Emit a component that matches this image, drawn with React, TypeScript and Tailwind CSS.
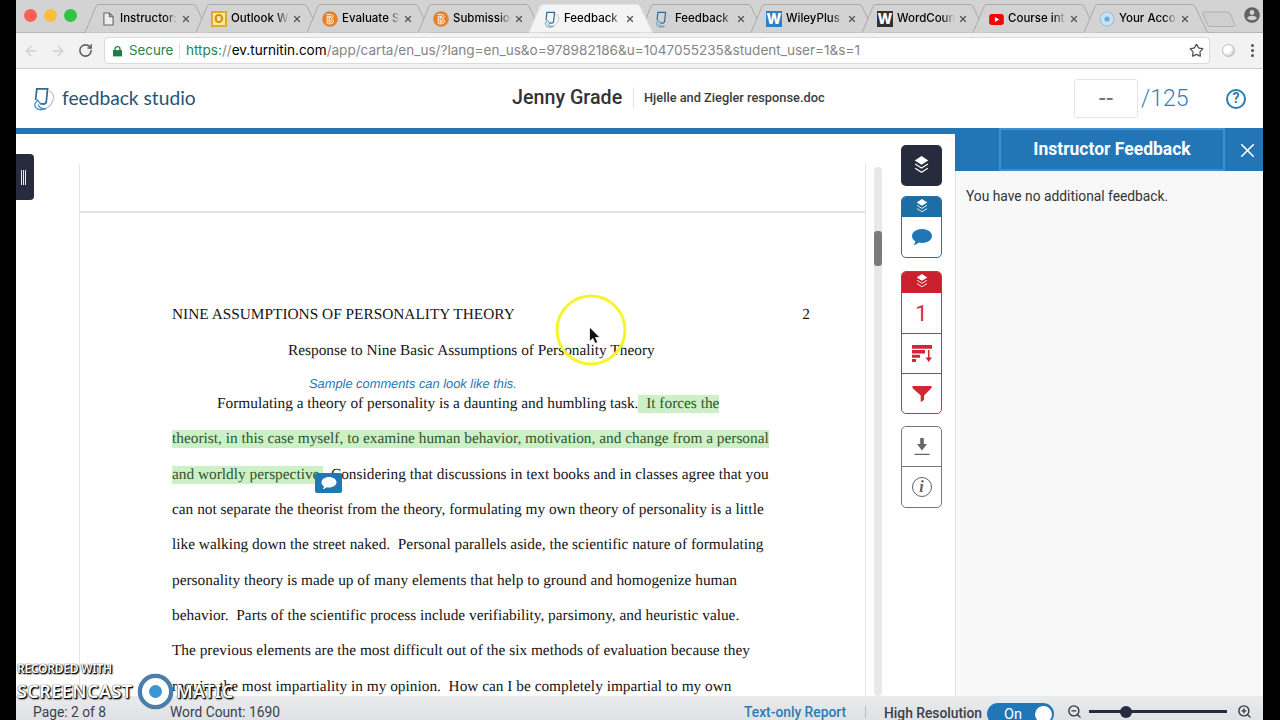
import { ArrowLeft, ArrowRight, RotateCw, Star, X, ZoomIn, ZoomOut } from 'lucide-react';
import type { ReactNode } from 'react';

function TurnitinMark({ className }: { className: string }) {
  return (
    <svg viewBox="0 0 22 24" fill="none" className={className}>
      <path d="M2.600 13 3.800 1.800h10.800L13.200 15.500l-2 1.700-4.200-.5" stroke="#34688f" strokeWidth="1.700" />
      <path d="M16.500 4c6.500 3.500 5.500 13-5.500 18.500" stroke="#b5c6d2" strokeWidth="1.200" />
      <path d="M1.500 17.500c.8 5 5.500 6.500 11.500 4.200-4.500.3-7.200-1.200-7.800-4.200" stroke="#4d93c7" strokeWidth="1.300" />
      <path d="M1.500 17.700 4.500 13l3.200 4.200" stroke="#4d93c7" strokeWidth="1.300" />
    </svg>
  );
}

function OrangeB() {
  return (
    <svg viewBox="0 0 16 16" className="size-4">
      <circle cx="8" cy="8" r="7.800" fill="#e5812a" />
      <path d="M4.500 3.500h4.200c3 0 3 4 .3 4.300 3.400.2 3.300 5-.5 5H5.200V5.300h3.200c1 0 1 1.200 0 1.200H7v4.800h1.700c1.300 0 1.300-1.800 0-1.800H7" fill="none" stroke="#fff" strokeWidth=".9" />
    </svg>
  );
}

function LetterW({ className }: { className: string }) {
  return (
    <span className={`flex size-4 items-center justify-center font-[Inter] text-[14px] leading-none font-extrabold text-white ${className}`}>
      W
    </span>
  );
}

const tabs: { title: string; icon: ReactNode; active?: boolean }[] = [
  {
    title: 'Instructor: C',
    icon: (
      <svg viewBox="0 0 12 15" className="h-[14px] w-[11px]" fill="#eee" stroke="#666" strokeWidth="1.200">
        <path d="M1 1h6l4 4v9H1zM7 1v4h4" />
      </svg>
    ),
  },
  {
    title: 'Outlook Web',
    icon: (
      <span className="flex size-4 items-center justify-center border-2 border-[#e0aa2a] bg-[#fbe9a5] font-[Inter] text-[12px] leading-none font-extrabold text-[#d48f10]">
        O
      </span>
    ),
  },
  { title: 'Evaluate Su', icon: <OrangeB /> },
  { title: 'Submission', icon: <OrangeB /> },
  { title: 'Feedback', icon: <TurnitinMark className="h-[17px] w-4" />, active: true },
  { title: 'Feedback', icon: <TurnitinMark className="h-[17px] w-4" /> },
  { title: 'WileyPlus', icon: <LetterW className="bg-[#2f7fc1]" /> },
  { title: 'WordCounte', icon: <LetterW className="bg-[#303030]" /> },
  {
    title: 'Course intro',
    icon: (
      <svg viewBox="0 0 16 12" className="h-[11px] w-[15px]">
        <rect width="16" height="12" rx="3" fill="#f00808" />
        <path d="m6.200 3.300 4.600 2.700-4.600 2.700z" fill="#fff" />
      </svg>
    ),
  },
  {
    title: 'Your Accou',
    icon: (
      <svg viewBox="0 0 16 16" className="size-4">
        <circle cx="8" cy="8" r="7" fill="#d3e0e8" stroke="#8cc6e8" strokeWidth="1.200" />
        <circle cx="8" cy="8" r="2.600" fill="#55b1e8" />
      </svg>
    ),
  },
];

function Tab({ title, icon, active }: { title: string; icon: ReactNode; active?: boolean }) {
  return (
    <div className={`relative h-[33px] w-[111px] shrink-0 ${active ? 'z-10' : ''}`}>
      <svg viewBox="0 0 124 33" className="absolute top-0 left-0 h-[33px] w-[124px]">
        <path
          d="M0 32.500 11 6.500q.8-2 3-2h94q2 0 3 2l12.500 26"
          fill={active ? '#f4f4f4' : '#d3d3d3'}
          stroke={active ? '#e4e4e4' : '#a9a9a9'}
        />
      </svg>
      <div className="relative flex h-[38px] items-center pl-[15px]">
        <span className="flex w-4 justify-center">{icon}</span>
        <span className="ml-1 w-[58px] overflow-hidden font-[Inter] text-[11.500px] font-medium whitespace-nowrap text-black mask-r-from-78% mask-r-to-100%">
          {title}
        </span>
        <X className="ml-[3px] size-[10px] text-[#555]" strokeWidth={3} />
      </div>
    </div>
  );
}

function Browser() {
  return (
    <>
      <div className="flex h-[33px] shrink-0 border-b border-[#b5b5b5] bg-[#d3d3d3]">
        <div className="flex w-[69px] shrink-0 gap-[7px] pt-[9px] pl-[8px]">
          <span className="size-[13px] rounded-full bg-[#f9605a]" />
          <span className="size-[13px] rounded-full bg-[#fbbd3c]" />
          <span className="size-[13px] rounded-full bg-[#2cc640]" />
        </div>
        {tabs.map((tab, i) => (
          <Tab key={i} {...tab} />
        ))}
        <svg viewBox="0 0 34 17" className="mt-[11px] ml-[7px] h-[17px] w-[34px] shrink-0" fill="#cfcfcf" stroke="#b0b0b0">
          <path d="M1.500 1h24q2 0 3 2l4 10.500q.5 2-1.500 2H8.500q-2 0-3-2L1 3q-.5-2 1-2z" />
        </svg>
        <svg viewBox="0 0 16 16" className="absolute top-[7px] right-[20px] size-4">
          <circle cx="8" cy="8" r="7.800" fill="#626262" />
          <circle cx="8" cy="5.500" r="2.400" fill="#d3d3d3" />
          <path d="M3.200 11c1-3 8.600-3 9.600 0-1.500 3-8 3-9.600 0z" fill="#d3d3d3" />
        </svg>
      </div>
      <div className="flex h-9 shrink-0 items-center border-b border-[#cfcfcf] bg-[#f2f2f2] pl-[7px]">
        <ArrowLeft className="size-[16px] text-[#cfcfcf]" strokeWidth={2} />
        <ArrowRight className="ml-[11px] size-[16px] text-[#cfcfcf]" strokeWidth={2} />
        <RotateCw className="ml-[12px] size-[15px] text-[#606060]" strokeWidth={2.500} />
        <div className="ml-[11px] flex h-[27px] w-[1106px] items-center rounded-[4px] border border-[#dadada] bg-white font-[Inter] text-[13.560px] text-[#858585]">
          <svg viewBox="0 0 10 12" className="ml-[8px] h-[12px] w-[9px]" fill="#188045">
            <path d="M0 5h10v7H0z" />
            <path d="M2.300 6V3.500c0-3.200 5.400-3.200 5.400 0V6" fill="none" stroke="#188045" strokeWidth="1.500" />
          </svg>
          <span className="ml-[7px] w-[44px] text-[13.300px] text-[#26834a]">Secure</span>
          <span className="ml-[6px] h-4 w-px bg-[#ddd]" />
          <span className="ml-[6px] whitespace-nowrap">
            <span className="text-[#26834a]">https:</span>//<span className="text-black">ev.turnitin.com</span>
            /app/carta/en_us/?lang=en_us&amp;o=978982186&amp;u=1047055235&amp;student_user=1&amp;s=1
          </span>
          <Star className="mr-[5px] ml-auto size-[15px] text-[#505050]" strokeWidth={2} />
        </div>
        <span className="ml-[12px] size-[13px] rounded-full border border-[#bbb] bg-radial-[at_35%_35%] from-white from-40% to-[#aaa]" />
        <span className="ml-[16px] flex flex-col gap-[2px]">
          <span className="size-[3px] rounded-full bg-[#555]" />
          <span className="size-[3px] rounded-full bg-[#555]" />
          <span className="size-[3px] rounded-full bg-[#555]" />
        </span>
      </div>
    </>
  );
}

function Header() {
  return (
    <div className="flex h-[59px] shrink-0 items-center bg-white pb-[2px]">
      <TurnitinMark className="mt-[3px] ml-[17px] h-6 w-[22px]" />
      <span className="mt-px ml-[7px] w-[400px] font-[Lato] text-[19.200px] text-[#1f5578]">feedback studio</span>
      <span className="ml-[50px] w-[112px] text-[19.700px] font-medium whitespace-nowrap text-[#333]">Jenny Grade</span>
      <span className="ml-[9px] h-[21px] w-px bg-[#e2e2e2]" />
      <span className="ml-[10px] w-[400px] text-[12.800px] font-medium text-[#3c3c3c]">Hjelle and Ziegler response.doc</span>
      <span className="mt-[2px] ml-[30px] flex h-[39px] w-[64px] items-center justify-center rounded-[3px] border border-[#e6e6e6] text-[22px] font-medium text-[#777]">
        --
      </span>
      <span className="mt-[3px] ml-[3px] w-[54px] text-[23px] font-light text-[#337fb5]">/125</span>
      <span className="mt-[2px] ml-[31px] flex size-[20px] items-center justify-center rounded-full border-2 border-[#2b7cb5] text-[14px] font-bold text-[#2b7cb5]">
        ?
      </span>
    </div>
  );
}

const lines = [
  'can not separate the theorist from the theory, formulating my own theory of personality is a little',
  'like walking down the street naked.  Personal parallels aside, the scientific nature of formulating',
  'personality theory is made up of many elements that help to ground and homogenize human',
  'behavior.  Parts of the scientific process include verifiability, parsimony, and heuristic value.',
  'The previous elements are the most difficult out of the six methods of evaluation because they',
  'require the most impartiality in my opinion.  How can I be completely impartial to my own',
];

function Bubble({ className }: { className: string }) {
  return (
    <svg viewBox="0 0 20 16" className={className} fill="currentColor">
      <path d="M10 0c5.500 0 10 3.200 10 7s-4.500 7-10 7c-1.200 0-2.300-.1-3.300-.4C5.200 15.200 3.500 16 1.500 16c1-1 1.700-2.200 1.800-3.700C1.200 11 0 9.100 0 7c0-3.800 4.500-7 10-7z" />
    </svg>
  );
}

function Document() {
  return (
    <div className="relative mt-[30px] ml-[63px] flex h-[532px] w-[787px] flex-col overflow-hidden border-x border-[#e6e6e6] bg-white font-['Liberation_Serif'] text-[15.355px] whitespace-pre text-[#141414] [text-rendering:geometricPrecision]">
      <div className="h-[49px] shrink-0 border-b-2 border-[#e3e3e3]" />
      <div className="mt-[84px] ml-[92px] flex h-[36px] w-[638px] shrink-0 items-center justify-between">
        <span>NINE ASSUMPTIONS OF PERSONALITY THEORY</span>
        <span>2</span>
      </div>
      <div className="ml-[208px] h-[36px] shrink-0 leading-[36px]">Response to Nine Basic Assumptions of Personality Theory</div>
      <div className="mt-[16.900px] ml-[92px] leading-[35.330px]">
        <div className="pl-[45px]">
          Formulating a theory of personality is a daunting and humbling task.
          <span className="bg-[#cdf1c6] pb-px text-[#31532d]">{'  It forces the'}</span>
        </div>
        <div>
          <span className="bg-[#cdf1c6] pb-px text-[#31532d]">
            theorist, in this case myself, to examine human behavior, motivation, and change from a personal
          </span>
        </div>
        <div>
          <span className="bg-[#cdf1c6] pb-px text-[#31532d]">and worldly perspective.</span>
          {'  Considering that discussions in text books and in classes agree that you'}
        </div>
        {lines.map((line) => (
          <div key={line}>{line}</div>
        ))}
      </div>
      <span className="absolute top-[210px] left-[229px] font-['Liberation_Sans'] text-[12.850px] text-[#2b78ad] italic">
        Sample comments can look like this.
      </span>
      <span className="absolute top-[309px] left-[235px] flex h-[20px] w-[27px] items-center justify-center rounded-[2px] bg-[#1f77b4] text-white">
        <Bubble className="h-3 w-4" />
      </span>
    </div>
  );
}

function Layers({ className }: { className: string }) {
  return (
    <svg viewBox="0 0 16 19" className={className} fill="none" stroke="#fff" strokeWidth="1.200">
      <path d="m8 0 7.200 4.600L8 9.200.8 4.600z" fill="#fff" stroke="none" />
      <path d="m1.200 8.500 6.800 4.300 6.800-4.300M1.200 13 8 17.300 14.800 13" />
    </svg>
  );
}

function Tools() {
  return (
    <div className="mt-[11px] ml-[19px] flex w-[41px] flex-col">
      <div className="flex h-[41px] items-center justify-center rounded-[5px] bg-[#262b3e] pb-[2px]">
        <Layers className="h-[18px] w-[15px]" />
      </div>
      <div className="mt-[10px] flex h-[62px] flex-col overflow-hidden rounded-[5px] border border-[#2b6f9e]">
        <div className="flex h-[20px] shrink-0 items-center justify-center bg-[#1c6ea4] pb-[3px]">
          <Layers className="h-[14px] w-[12px]" />
        </div>
        <div className="flex flex-1 items-center justify-center text-[#1f77b8]">
          <Bubble className="h-4 w-5" />
        </div>
      </div>
      <div className="mt-[13px] flex h-[143px] flex-col overflow-hidden rounded-[5px] border border-[#bd3843]">
        <div className="flex h-[21px] items-center justify-center bg-[#cb202d] pb-[3px]">
          <Layers className="h-[14px] w-[12px]" />
        </div>
        <div className="flex h-[40px] items-center justify-center text-[22px] text-[#d32f3a]">1</div>
        <div className="flex h-[40px] items-center justify-center border-t border-[#bd3843]">
          <svg viewBox="0 0 20 18" className="h-[18px] w-5" fill="#d32532">
            <path d="M0 0h20v3.800H0zM0 5h13v3.500H0zM0 9.800h8v3H0zM0 14h4v3H0z" />
            <path d="M16 5h1.500v7.500H20L16.700 17l-3.200-4.500H16z" />
          </svg>
        </div>
        <div className="flex h-[40px] items-center justify-center border-t border-[#bd3843]">
          <svg viewBox="0 0 20 16" className="h-4 w-5" fill="#d32532">
            <path d="M.5 0h19v2L12 9.500V14l-3.300 2V9.500L.5 2z" />
          </svg>
        </div>
      </div>
      <div className="mt-[12px] flex h-[82px] flex-col rounded-[5px] border border-[#777]">
        <div className="flex h-[40px] items-center justify-center border-b border-[#777]">
          <svg viewBox="0 0 16 18" className="h-[18px] w-4" fill="#666">
            <path d="M6.200 0h3.600v6H13l-5 6.500L3 6h3.200zM.5 15.800h15V17H.5z" />
          </svg>
        </div>
        <div className="flex flex-1 items-center justify-center">
          <span className="flex size-5 items-center justify-center rounded-full border-[1.500px] border-[#5d626b] font-['Liberation_Serif'] text-[16px] leading-none font-bold text-[#5d626b] italic">
            i
          </span>
        </div>
      </div>
    </div>
  );
}

function Footer() {
  return (
    <div className="flex h-6 shrink-0 items-start bg-linear-to-b from-[#e9ebec] to-[#dfe2e6] pt-[7px] text-[13.800px] leading-[19px] whitespace-nowrap text-[#3d4048]">
      <span className="ml-[17px] w-[137px] shrink-0">Page: 2 of 8</span>
      <span className="w-[574px] shrink-0">Word Count: 1690</span>
      <span className="w-[103px] shrink-0 font-medium text-[#2b7cb5]">Text-only Report</span>
      <span className="mt-[3px] ml-[18px] h-3 w-px bg-[#bbb]" />
      <span className="ml-[18px] w-[98px] shrink-0 pt-px font-medium">High Resolution</span>
      <span className="ml-[5px] flex h-[22px] w-[67px] shrink-0 items-center rounded-full bg-[#1f77b8] pr-[2px] pl-[17px] text-[14.500px] text-white">
        On
        <span className="ml-auto size-[17px] rounded-full bg-white" />
      </span>
      <ZoomOut className="mt-[1px] ml-[13px] size-[15px] shrink-0 text-[#333846]" strokeWidth={2.200} />
      <span className="relative mt-[7px] ml-[7px] h-[3px] w-[138px] shrink-0 bg-[#262b3e]">
        <span className="absolute -top-[4.500px] left-[31px] size-[12px] rounded-full bg-[#262b3e]" />
      </span>
      <ZoomIn className="mt-[1px] ml-[10px] size-[15px] shrink-0 text-[#333846]" strokeWidth={2.200} />
    </div>
  );
}

function Watermark() {
  return (
    <div className="absolute top-[661px] left-[17px] font-['Noto_Sans'] font-semibold text-white [text-shadow:1px_1px_1px_#000,1px_1px_2px_#000,0_0_1px_#000]">
      <div className="text-[12px] leading-[15px] tracking-[-0.250px]">RECORDED WITH</div>
      <div className="-mt-[2px] flex h-[34px] items-center text-[18px] leading-none">
        <span className="w-[121px] tracking-[0.450px]">SCREENCAST</span>
        <span className="flex size-[35px] items-center justify-center rounded-full border-[4px] border-[#477fae] bg-white shadow-[0_0_1px_#234]">
          <span className="size-[13px] rounded-full bg-[#3c95d0]" />
        </span>
        <span className="ml-[3px] tracking-[0.300px]">MATIC</span>
      </div>
    </div>
  );
}

export default function App() {
  return (
    <div className="relative h-[720px] w-[1280px] overflow-hidden bg-black pr-[17px] pl-4">
      <div className="flex h-full flex-col overflow-hidden bg-white font-[Roboto]">
        <Browser />
        <Header />
        <div className="flex h-[568px] shrink-0">
          <div className="relative flex w-[939px] border-t-[6px] border-[#2276b6] bg-white">
            <span className="absolute top-[20px] left-0 flex h-[46px] w-[18px] items-center justify-center gap-px rounded-r-[4px] bg-[#262b3e] pr-[3px]">
              <span className="h-[15px] w-px bg-white/90" />
              <span className="h-[15px] w-px bg-white/90" />
              <span className="h-[15px] w-px bg-white/90" />
            </span>
            <Document />
            <div className="mt-[33px] ml-[8px] h-[529px] w-[8px] rounded-full bg-[#e8e8e8] pt-[64px]">
              <div className="h-[35px] rounded-[3px] bg-[#7b7b7b]" />
            </div>
            <Tools />
          </div>
          <div className="flex-1 bg-[#f8f8f8]">
            <div className="flex h-[43px] items-center bg-[#2276b6] pl-[44px]">
              <span className="flex h-[43px] w-[226px] items-center justify-center border-2 border-[#3d8fce] text-[17.500px] font-bold whitespace-nowrap text-white">
                Instructor Feedback
              </span>
              <X className="mt-[2px] ml-[11px] size-[23px] text-white" strokeWidth={1.700} />
            </div>
            <p className="h-[525px] border-l border-[#e0e0e0] pt-[15px] pl-[10px] text-[13.800px] leading-[21px] text-[#333]">
              You have no additional feedback.
            </p>
          </div>
        </div>
        <Footer />
      </div>
      <Watermark />
      <svg viewBox="0 0 72 72" className="absolute top-[294px] left-[555px] size-[72px]">
        <circle cx="36" cy="36" r="34" fill="none" stroke="#f7f52a" strokeWidth="3" />
        <path d="M34.500 33v14.500l3.400-3 2.200 5 2.600-1.200-2.200-4.800h4.500z" fill="#111" stroke="#fff" strokeWidth=".8" />
      </svg>
    </div>
  );
}
